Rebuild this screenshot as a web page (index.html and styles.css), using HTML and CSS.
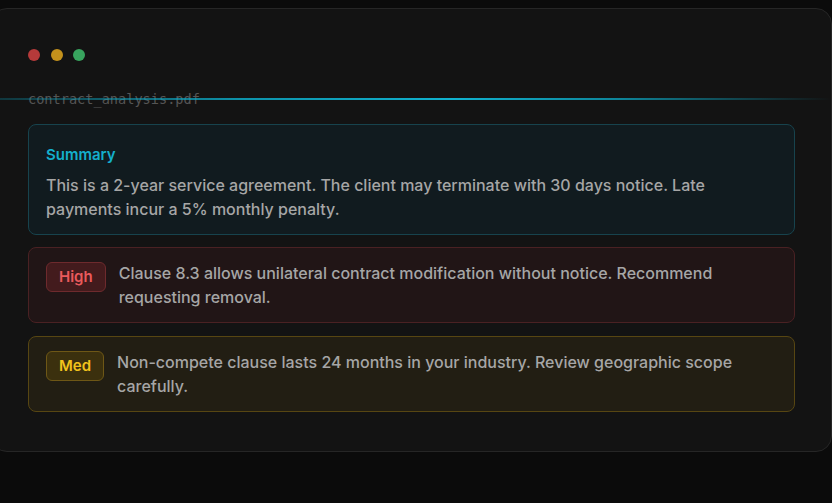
FILE: index.html
```html
<!DOCTYPE html>
<html lang="en">
<head>
<meta charset="utf-8">
<title>contract_analysis.pdf</title>
<link rel="stylesheet" href="styles.css">
</head>
<body>
<div class="card">
  <div class="dots">
    <span class="dot red"></span>
    <span class="dot yellow"></span>
    <span class="dot green"></span>
  </div>
  <div class="file">contract_analysis.pdf</div>
  <div class="scan"></div>
  <div class="list">
    <section class="box summary">
      <h3 class="summary-title">Summary</h3>
      <p class="text">This is a 2-year service agreement. The client may terminate with 30 days notice. Late payments incur a 5% monthly penalty.</p>
    </section>
    <section class="box risk high">
      <span class="badge badge-high">High</span>
      <p class="text">Clause 8.3 allows unilateral contract modification without notice. Recommend requesting removal.</p>
    </section>
    <section class="box risk med">
      <span class="badge badge-med">Med</span>
      <p class="text">Non-compete clause lasts 24 months in your industry. Review geographic scope carefully.</p>
    </section>
  </div>
</div>
</body>
</html>
```

FILE: styles.css
```css
* { box-sizing: border-box; }
html, body { margin: 0; padding: 0; }
body {
  background: #0b0b0b;
  font-family: Inter, "Noto Sans", sans-serif;
  height: 503px;
  overflow: hidden;
  padding-top: 8px;
}
.card {
  position: relative;
  width: 841px;
  margin-left: -9px;
  height: 444px;
  background: #131313;
  border: 1px solid #262626;
  border-radius: 16px;
  padding: 35px 36px 36px;
}
.dots {
  display: flex;
  gap: 10.5px;
  margin-top: 5px;
  height: 12px;
}
.dot { width: 12px; height: 12px; border-radius: 50%; display: block; }
.red { background: #b63a3a; }
.yellow { background: #c3911c; }
.green { background: #38a45e; }
.file {
  margin-top: 30px;
  font-family: "DejaVu Sans Mono", "Liberation Mono", monospace;
  font-size: 13.6px;
  line-height: 17px;
  color: #555555;
}
.scan {
  position: absolute;
  left: 0;
  right: 0;
  top: 89px;
  height: 2px;
  background: linear-gradient(90deg, rgba(8,150,175,0.25) 0%, rgba(12,170,198,0.85) 30%, #10b2cf 55%, rgba(12,160,186,0.8) 75%, rgba(12,160,186,0) 100%);
}
.list {
  margin-top: 16px;
  display: flex;
  flex-direction: column;
  gap: 12px;
}
.box {
  border: 1px solid;
  border-radius: 8px;
  padding: 20px 17px 13px;
}
.summary {
  background: #111b1f;
  border-color: #17434d;
}
.summary-title {
  margin: 0 0 8px;
  font-size: 15px;
  line-height: 20px;
  font-weight: 600;
  color: #14afcc;
}
.text {
  margin: 0;
  font-size: 16px;
  line-height: 24px;
  font-weight: 500;
  color: #a6a6a6;
}
.risk {
  display: flex;
  align-items: flex-start;
  gap: 13px;
  padding: 13px 17px 13px;
}
.high {
  background: #211516;
  border-color: #4a2123;
}
.med {
  margin-top: 1px;
  background: #221e13;
  border-color: #574612;
}
.badge {
  flex: none;
  display: block;
  border: 1px solid;
  border-radius: 6px;
  font-size: 15px;
  font-weight: 600;
  line-height: 28px;
  height: 30px;
  padding: 0 12px;
  margin-top: 1px;
}
.badge-high {
  background: #431b1d;
  border-color: #6e2a2d;
  color: #ea5a5c;
}
.badge-med {
  background: #3b300e;
  border-color: #6e5716;
  color: #f2c21c;
}
```
